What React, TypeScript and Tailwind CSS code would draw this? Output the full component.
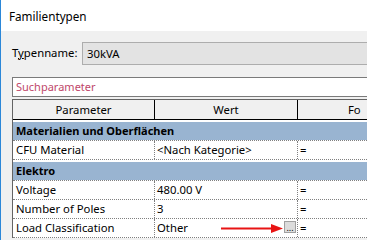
import React from "react";

const font = { fontFamily: '"Noto Sans", "Open Sans", sans-serif' };

function DataRow({ name, value, extra }: { name: string; value: string; extra?: React.ReactNode }) {
  return (
    <div className="grid grid-cols-[142px_143px_1fr] h-[19px] border-b border-dotted border-[#808080] bg-white text-[11.3px] leading-[18px] text-black">
      <div className="pl-[3px] border-r border-dotted border-[#808080] whitespace-nowrap overflow-hidden">{name}</div>
      <div className="relative pl-[2px] border-r border-dotted border-[#808080] whitespace-nowrap">
        {value}
        {extra}
      </div>
      <div className="pl-[2px]">=</div>
    </div>
  );
}

function CatRow({ label }: { label: string }) {
  return (
    <div className="h-[21px] pt-[2px] bg-white border-b border-dotted border-[#808080]">
      <div className="h-[18px] bg-[#99b4d1] pl-[3px] text-[11px] leading-[18px] font-bold text-black whitespace-nowrap">
        {label}
      </div>
    </div>
  );
}

export default function App() {
  return (
    <div className="w-[367px] h-[240px] overflow-hidden bg-[#f0f0f0] border-l border-[#2b87d8] flex flex-col" style={font}>
      <div className="h-[31px] bg-white pl-[8px] text-[11.7px] leading-[32px] text-black shrink-0">Familientypen</div>
      <div className="pl-[11px] flex flex-col">
        <div className="flex items-center mt-[11px] h-[23px]">
          <div className="w-[70px] text-[11.3px] text-black">
            T<span className="underline">y</span>penname:
          </div>
          <div className="flex-1 h-[23px] bg-[#e3e3e3] border border-[#adadad] border-r-0 pl-[4px] text-[11.3px] leading-[21px] text-black">
            30kVA
          </div>
        </div>
        <div className="mt-[12px] h-[20px] bg-white border border-[#7a7a7a] border-r-0 pl-[3px] text-[11px] leading-[18px] text-[#c0476a]">
          Suchparameter
        </div>
        <div className="mt-[2px] border-l border-t border-[#646464] bg-white">
          <div className="grid grid-cols-[142px_143px_1fr] h-[20px] bg-[#f0f0f0] border-b border-black text-[11.3px] leading-[19px] text-black">
            <div className="text-center border-r border-black">Parameter</div>
            <div className="text-center border-r border-black">Wert</div>
            <div className="pl-[50px] whitespace-nowrap">Fo</div>
          </div>
          <CatRow label="Materialien und Oberflächen" />
          <DataRow name="CFU Material" value="<Nach Kategorie>" />
          <CatRow label="Elektro" />
          <DataRow name="Voltage" value="480.00 V" />
          <DataRow name="Number of Poles" value="3" />
          <DataRow
            name="Load Classification"
            value="Other"
            extra={
              <>
                <svg className="absolute left-[66px] top-[4px]" width="62" height="11" viewBox="0 0 62 11">
                  <line x1="0" y1="5.5" x2="54" y2="5.5" stroke="#e81414" strokeWidth="2" />
                  <polygon points="50,1 62,5.5 50,10" fill="#e81414" />
                </svg>
                <div className="absolute left-[129px] top-[2px] w-[12px] h-[12px] bg-[#dcdcdc] border border-[#a0a0a0] text-[9px] leading-[12px] text-center text-black">
                  ...
                </div>
              </>
            }
          />
        </div>
      </div>
    </div>
  );
}
